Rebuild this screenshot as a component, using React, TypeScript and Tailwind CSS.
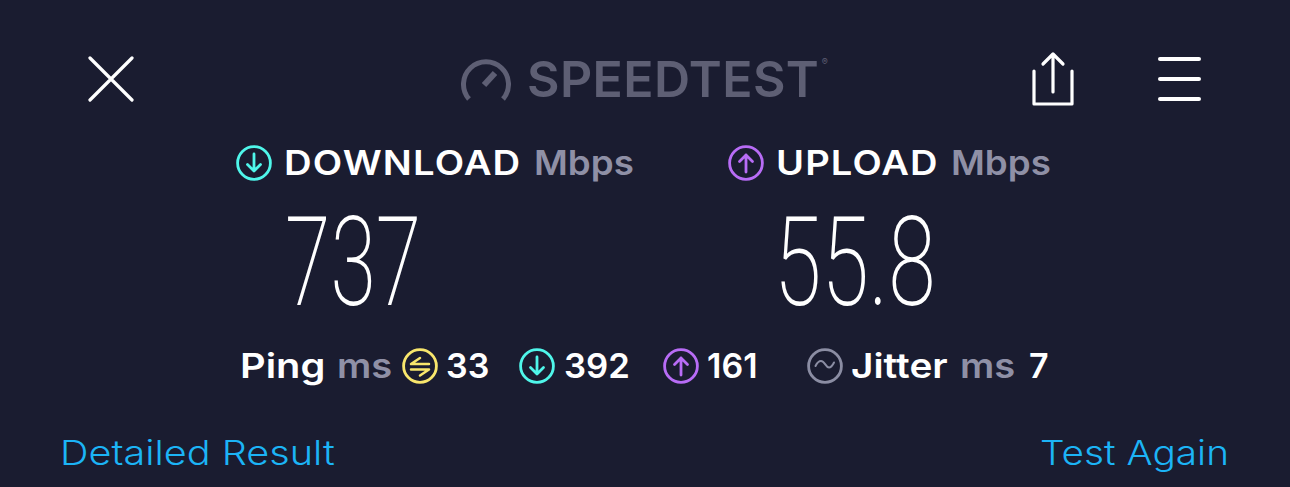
import * as React from "react";

const DownIcon = ({ className = "" }: { className?: string }) => (
  <svg viewBox="0 0 36 36" className={`w-[36px] h-[36px] shrink-0 ${className}`} fill="none" stroke="#4ff6ea" strokeWidth="2.8" strokeLinecap="round" strokeLinejoin="round">
    <circle cx="18" cy="18" r="16.4" />
    <path d="M18 9v17M11.5 19.5 18 26l6.5-6.5" />
  </svg>
);

const UpIcon = ({ className = "" }: { className?: string }) => (
  <svg viewBox="0 0 36 36" className={`w-[36px] h-[36px] shrink-0 ${className}`} fill="none" stroke="#b86cf6" strokeWidth="2.8" strokeLinecap="round" strokeLinejoin="round">
    <circle cx="18" cy="18" r="16.4" />
    <path d="M18 27V10M11.5 16.5 18 10l6.5 6.5" />
  </svg>
);

const PingIcon = ({ className = "" }: { className?: string }) => (
  <svg viewBox="0 0 36 36" className={`w-[36px] h-[36px] shrink-0 ${className}`} fill="none" stroke="#f8e66c" strokeWidth="2.8" strokeLinecap="round" strokeLinejoin="round">
    <circle cx="18" cy="18" r="16.4" />
    <path d="M18 10 9 16H27M9 21.5H27L18 27.5" strokeWidth="2.5" />
  </svg>
);

const JitterIcon = ({ className = "" }: { className?: string }) => (
  <svg viewBox="0 0 36 36" className={`w-[36px] h-[36px] shrink-0 ${className}`} fill="none" stroke="#8b8da3" strokeWidth="2.8" strokeLinecap="round">
    <circle cx="18" cy="18" r="16.4" />
    <path d="M8.5 18c1.5-3 3-5 5.5-5 4 0 4.5 6.5 8 6.5 2 0 3.5-2 5-5" strokeWidth="2" />
  </svg>
);

const App = () => {
  return (
    <div className="w-[1290px] h-[487px] overflow-hidden bg-[#1a1c30] text-white font-['Inter',sans-serif] flex flex-col">
      {/* top bar */}
      <div className="flex items-center h-[46px] mt-[56px] pl-[88px]">
        <svg viewBox="0 0 46 46" className="w-[46px] h-[46px] shrink-0" stroke="#fff" strokeWidth="3.2" strokeLinecap="round">
          <path d="M2 2l42 42M44 2 2 44" />
        </svg>
        <div className="flex items-center ml-[327px] w-[367px] h-[46px] text-[#5e5f74]">
          <svg viewBox="0 0 50 43" className="w-[50px] h-[43px] shrink-0" fill="none" stroke="#5e5f74">
            <path d="M8 41A22.5 22.5 0 1 1 42 41" strokeWidth="5" />
            <path d="M23 27 34 15" strokeWidth="6" />
          </svg>
          <span className="relative ml-[16px] text-[50px] leading-none font-semibold tracking-[0.4px]">
            SPEEDTEST
            <span className="absolute top-[3px] -right-[9px] text-[9px] leading-none font-normal">®</span>
          </span>
        </div>
        <svg viewBox="0 0 42 56" className="w-[42px] h-[56px] ml-[204px] shrink-0" fill="none" stroke="#fff" strokeWidth="3.2" strokeLinecap="round" strokeLinejoin="round">
          <path d="M21 3v38M11 13 21 3l10 10M2 20v33h38V20" />
        </svg>
        <div className="ml-[84px] w-[43px] flex flex-col gap-[16px]">
          <div className="h-[4px] rounded-full bg-white" />
          <div className="h-[4px] rounded-full bg-white" />
          <div className="h-[4px] rounded-full bg-white" />
        </div>
      </div>

      {/* download / upload */}
      <div className="flex items-center h-[40px] mt-[41px] pl-[236px] text-[34px] font-semibold leading-none whitespace-nowrap">
        <DownIcon />
        <span className="ml-[12px] w-[236px] origin-left scale-x-[1.125] tracking-[1px]">DOWNLOAD</span>
        <span className="ml-[14px] w-[100px] origin-left scale-x-[1.08] text-[#8f90a6]">Mbps</span>
        <UpIcon className="ml-[94px]" />
        <span className="ml-[12px] w-[161px] origin-left scale-x-[1.12] tracking-[1px]">UPLOAD</span>
        <span className="ml-[14px] w-[100px] origin-left scale-x-[1.08] text-[#8f90a6]">Mbps</span>
      </div>

      {/* big numbers */}
      <div className="flex h-[91px] mt-[34px] pl-[285px] font-['Roboto',sans-serif] font-extralight text-[124px] leading-[91px] whitespace-nowrap">
        <div className="w-[136px] origin-left scale-x-[0.665]">737</div>
        <div className="ml-[353px] w-[156px] origin-left scale-x-[0.695]">55.8</div>
      </div>

      {/* ping / jitter */}
      <div className="flex items-center h-[40px] mt-[38px] pl-[240px] text-[34px] font-semibold leading-none whitespace-nowrap">
        <span className="w-[85px] origin-left scale-x-[1.17]">Ping</span>
        <span className="ml-[12px] w-[54px] origin-left scale-x-[1.12] text-[#8f90a6]">ms</span>
        <PingIcon className="ml-[11px]" />
        <span className="ml-[8px] w-[43px]">33</span>
        <DownIcon className="ml-[30px]" />
        <span className="ml-[9px] w-[66px] origin-left scale-x-[1.02]">392</span>
        <UpIcon className="ml-[33px]" />
        <span className="ml-[8px] w-[51px]">161</span>
        <JitterIcon className="ml-[49px]" />
        <span className="ml-[8px] w-[96px] origin-left scale-x-[1.14]">Jitter</span>
        <span className="ml-[13px] w-[55px] origin-left scale-x-[1.12] text-[#8f90a6]">ms</span>
        <span className="ml-[14px]">7</span>
      </div>

      {/* links */}
      <div className="flex items-center h-[40px] mt-[47px] pl-[60px] text-[34px] font-light leading-none text-[#1cb4f6] whitespace-nowrap">
        <span className="w-[273px] origin-left scale-x-[1.165]">Detailed Result</span>
        <span className="ml-[707px] w-[186px] origin-left scale-x-[1.14]">Test Again</span>
      </div>
    </div>
  );
};

export default App;
